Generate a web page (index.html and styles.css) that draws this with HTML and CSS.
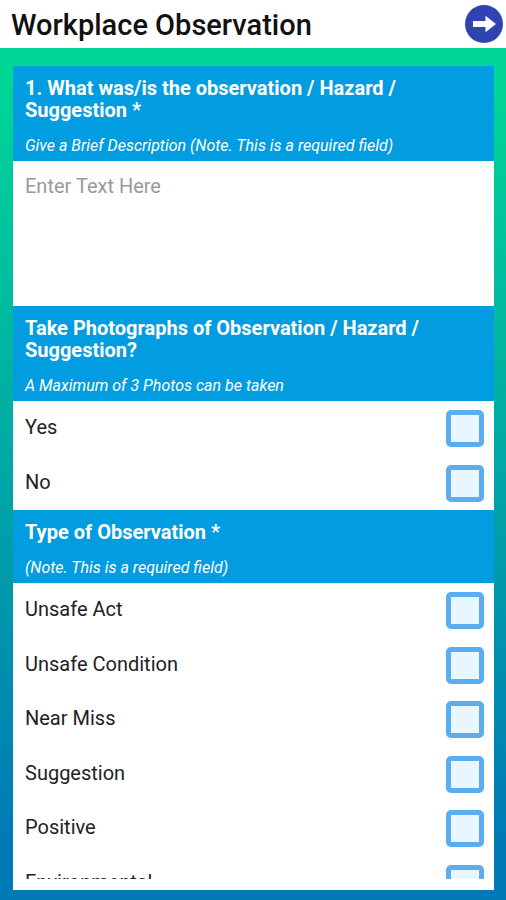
FILE: index.html
```html
<!DOCTYPE html>
<html lang="en">
<head>
<meta charset="utf-8">
<meta name="viewport" content="width=device-width, initial-scale=1">
<title>Workplace Observation</title>
<link rel="stylesheet" href="styles.css">
</head>
<body>
<header class="topbar">
  <h1 class="topbar-title">Workplace Observation</h1>
  <button class="next" type="submit" form="observation" aria-label="Next">
    <svg viewBox="0 0 38 38" aria-hidden="true">
      <circle cx="19" cy="19" r="19" fill="#3143b0"/>
      <path d="M8 16h12.500V10.800L31 19l-10.500 8.200V22H8z" fill="#fff"/>
    </svg>
  </button>
</header>
<main class="page">
  <form class="card" id="observation">
    <div class="scroll">
      <section>
        <div class="head">
          <h2 class="question"><label for="description">1. What was/is the observation / Hazard / Suggestion *</label></h2>
          <p class="note">Give a Brief Description (Note. This is a required field)</p>
        </div>
        <textarea class="entry" id="description" placeholder="Enter Text Here"></textarea>
      </section>
      <section>
        <div class="head">
          <h2 class="question">Take Photographs of Observation / Hazard / Suggestion?</h2>
          <p class="note">A Maximum of 3 Photos can be taken</p>
        </div>
        <div class="options">
          <label class="option">Yes<input class="box" type="checkbox"></label>
          <label class="option">No<input class="box" type="checkbox"></label>
        </div>
      </section>
      <section>
        <div class="head">
          <h2 class="question">Type of Observation *</h2>
          <p class="note">(Note. This is a required field)</p>
        </div>
        <div class="options">
          <label class="option">Unsafe Act<input class="box" type="checkbox"></label>
          <label class="option">Unsafe Condition<input class="box" type="checkbox"></label>
          <label class="option">Near Miss<input class="box" type="checkbox"></label>
          <label class="option">Suggestion<input class="box" type="checkbox"></label>
          <label class="option">Positive<input class="box" type="checkbox"></label>
          <label class="option">Environmental<input class="box" type="checkbox"></label>
        </div>
      </section>
    </div>
  </form>
</main>
</body>
</html>
```
FILE: styles.css
```css
* {
  box-sizing: border-box;
}

body {
  display: flex;
  flex-direction: column;
  height: 100vh;
  margin: 0;
  font-family: Roboto, "Liberation Sans", sans-serif;
  color: #222;
}

.topbar {
  display: flex;
  align-items: center;
  justify-content: space-between;
  padding: 5px 3px 5px 11px;
  background: #fff;
}

.topbar-title {
  margin: 0;
  padding-top: 2px;
  font-size: 29px;
  line-height: 36px;
  font-weight: 500;
  color: #111;
}

.next {
  width: 38px;
  height: 38px;
  padding: 0;
  border: 0;
  border-radius: 50%;
  background: none;
}

.next svg {
  display: block;
}

.page {
  display: flex;
  flex: 1;
  min-height: 0;
  padding: 18px 12px 10px 13px;
  background: linear-gradient(#00d796 3%, #007bb6 92%);
}

.card {
  display: flex;
  flex: 1;
  min-width: 0;
  padding-bottom: 11px;
  background: #fff;
}

.scroll {
  flex: 1;
  overflow-y: auto;
  scrollbar-width: none;
}

.head {
  padding: 11px 12px 5px;
  background: #029ce1;
  color: #fff;
}

.question {
  margin: 0 0 15px;
  font-size: 20px;
  line-height: 22px;
  font-weight: 700;
}

.note {
  margin: 0;
  font-size: 16px;
  line-height: 20px;
  font-style: italic;
}

.entry {
  display: block;
  width: 100%;
  height: 145px;
  padding: 13px 12px;
  border: 0;
  outline: 0;
  resize: none;
  background: #fff;
  font: 20px/24px Roboto, "Liberation Sans", sans-serif;
}

.entry::placeholder {
  color: #999;
}

.options {
  display: grid;
  grid-auto-rows: 55px 54px;
}

.option {
  display: flex;
  align-items: flex-start;
  justify-content: space-between;
  padding: 9px 10px 0 12px;
  font-size: 20px;
  line-height: 34px;
}

.box {
  appearance: none;
  width: 38px;
  height: 37px;
  margin: 0;
  border: 5px solid #5aaef0;
  border-radius: 5px;
  background: #e8f6ff;
}

.box:checked {
  background: #5aaef0;
}
```
